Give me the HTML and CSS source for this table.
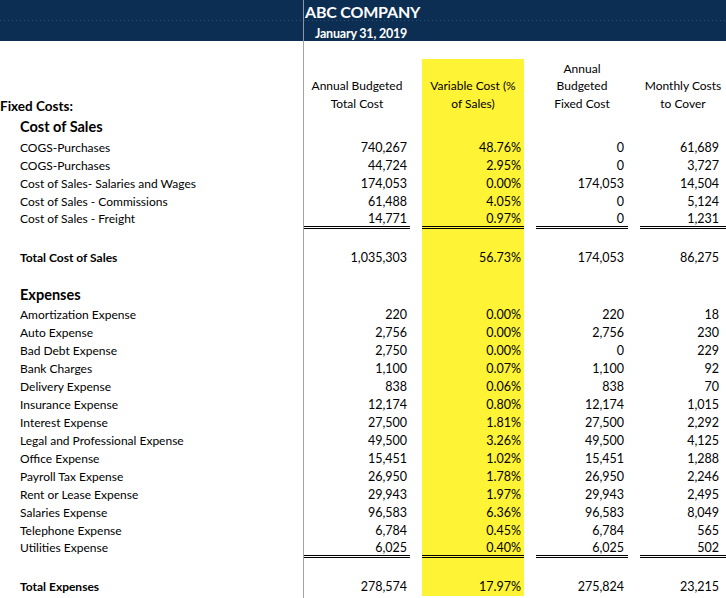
FILE: index.html
```html
<!DOCTYPE html>
<html>
<head>
<meta charset="utf-8">
<title>ABC Company - Break-even Costs</title>
<link rel="stylesheet" href="styles.css">
</head>
<body>
<div class="sheet">
  <div class="band">
    <div class="row band-row">
      <div class="label"></div>
      <div class="title">ABC COMPANY</div>
    </div>
    <div class="row band-row">
      <div class="label"></div>
      <div class="date">January 31, 2019</div>
    </div>
  </div>

  <div class="row gap-top"><div class="label"></div></div>

  <div class="row head">
    <div class="label"><span class="fixed">Fixed Costs:</span></div>
    <div class="h c1">Annual Budgeted<br>Total Cost</div>
    <div class="h c2 v">Variable Cost (%<br>of Sales)</div>
    <div class="h c3">Annual<br>Budgeted<br>Fixed Cost</div>
    <div class="h c4">Monthly Costs<br>to Cover</div>
  </div>

  <div class="row section cos">
    <div class="label"><span class="sec">Cost of Sales</span></div>
    <div class="c2 v"></div>
  </div>

  <div class="row"><div class="label item">COGS-Purchases</div><div class="n c1">740,267</div><div class="n c2 v">48.76%</div><div class="n c3">0</div><div class="n c4">61,689</div></div>
  <div class="row"><div class="label item">COGS-Purchases</div><div class="n c1">44,724</div><div class="n c2 v">2.95%</div><div class="n c3">0</div><div class="n c4">3,727</div></div>
  <div class="row"><div class="label item">Cost of Sales- Salaries and Wages</div><div class="n c1">174,053</div><div class="n c2 v">0.00%</div><div class="n c3">174,053</div><div class="n c4">14,504</div></div>
  <div class="row"><div class="label item">Cost of Sales - Commissions</div><div class="n c1">61,488</div><div class="n c2 v">4.05%</div><div class="n c3">0</div><div class="n c4">5,124</div></div>
  <div class="row last"><div class="label item">Cost of Sales - Freight</div><div class="n c1 ul">14,771</div><div class="n c2 v ul">0.97%</div><div class="n c3 ul">0</div><div class="n c4 ul">1,231</div></div>

  <div class="row b20"><div class="label"></div><div class="c2 v"></div></div>

  <div class="row total"><div class="label item strong">Total Cost of Sales</div><div class="n c1">1,035,303</div><div class="n c2 v">56.73%</div><div class="n c3">174,053</div><div class="n c4">86,275</div></div>

  <div class="row b17"><div class="label"></div><div class="c2 v"></div></div>

  <div class="row section exp">
    <div class="label"><span class="sec">Expenses</span></div>
    <div class="c2 v"></div>
  </div>

  <div class="row"><div class="label item">Amortization Expense</div><div class="n c1">220</div><div class="n c2 v">0.00%</div><div class="n c3">220</div><div class="n c4">18</div></div>
  <div class="row"><div class="label item">Auto Expense</div><div class="n c1">2,756</div><div class="n c2 v">0.00%</div><div class="n c3">2,756</div><div class="n c4">230</div></div>
  <div class="row"><div class="label item">Bad Debt Expense</div><div class="n c1">2,750</div><div class="n c2 v">0.00%</div><div class="n c3">0</div><div class="n c4">229</div></div>
  <div class="row"><div class="label item">Bank Charges</div><div class="n c1">1,100</div><div class="n c2 v">0.07%</div><div class="n c3">1,100</div><div class="n c4">92</div></div>
  <div class="row"><div class="label item">Delivery Expense</div><div class="n c1">838</div><div class="n c2 v">0.06%</div><div class="n c3">838</div><div class="n c4">70</div></div>
  <div class="row"><div class="label item">Insurance Expense</div><div class="n c1">12,174</div><div class="n c2 v">0.80%</div><div class="n c3">12,174</div><div class="n c4">1,015</div></div>
  <div class="row"><div class="label item">Interest Expense</div><div class="n c1">27,500</div><div class="n c2 v">1.81%</div><div class="n c3">27,500</div><div class="n c4">2,292</div></div>
  <div class="row"><div class="label item">Legal and Professional Expense</div><div class="n c1">49,500</div><div class="n c2 v">3.26%</div><div class="n c3">49,500</div><div class="n c4">4,125</div></div>
  <div class="row"><div class="label item">Office Expense</div><div class="n c1">15,451</div><div class="n c2 v">1.02%</div><div class="n c3">15,451</div><div class="n c4">1,288</div></div>
  <div class="row"><div class="label item">Payroll Tax Expense</div><div class="n c1">26,950</div><div class="n c2 v">1.78%</div><div class="n c3">26,950</div><div class="n c4">2,246</div></div>
  <div class="row"><div class="label item">Rent or Lease Expense</div><div class="n c1">29,943</div><div class="n c2 v">1.97%</div><div class="n c3">29,943</div><div class="n c4">2,495</div></div>
  <div class="row"><div class="label item">Salaries Expense</div><div class="n c1">96,583</div><div class="n c2 v">6.36%</div><div class="n c3">96,583</div><div class="n c4">8,049</div></div>
  <div class="row"><div class="label item">Telephone Expense</div><div class="n c1">6,784</div><div class="n c2 v">0.45%</div><div class="n c3">6,784</div><div class="n c4">565</div></div>
  <div class="row last"><div class="label item">Utilities Expense</div><div class="n c1 ul">6,025</div><div class="n c2 v ul">0.40%</div><div class="n c3 ul">6,025</div><div class="n c4 ul">502</div></div>

  <div class="row b20"><div class="label"></div><div class="c2 v"></div></div>

  <div class="row total"><div class="label item strong">Total Expenses</div><div class="n c1">278,574</div><div class="n c2 v">17.97%</div><div class="n c3">275,824</div><div class="n c4">23,215</div></div>

  <div class="row tail"><div class="label"></div></div>
</div>
</body>
</html>
```

FILE: styles.css
```css
* { box-sizing: border-box; }

html, body {
  margin: 0;
  padding: 0;
  background: #ffffff;
}

body {
  font-family: Lato, "Open Sans", "Liberation Sans", sans-serif;
  font-size: 12px;
  color: #000000;
  width: 726px;
  overflow: hidden;
}

.sheet {
  display: flex;
  flex-direction: column;
}

/* label | col1 | gap | col2 | gap | col3 | gap | col4 */
.row {
  display: grid;
  grid-template-columns: 304px 106px 12px 102px 12px 92px 12px 86px;
  height: 18px;
  line-height: 18px;
}

.label {
  grid-column: 1;
  border-right: 1px solid #a3a3a3;
  white-space: nowrap;
}

.c1 { grid-column: 2; }
.c2 { grid-column: 4; }
.c3 { grid-column: 6; }
.c4 { grid-column: 8; }

.item {
  padding-left: 20px;
}

.strong {
  font-weight: 700;
}

/* header band */
.band {
  background: #0b2e52;
  height: 41px;
  display: flex;
  flex-direction: column;
}

.band-row {
  height: 20px;
  line-height: 20px;
}

.band-row:first-child {
  height: 21px;
  background-image: linear-gradient(to right, rgba(255,255,255,0.16) 1px, transparent 1px);
  background-size: 4px 1px;
  background-repeat: repeat-x;
  background-position: 0 bottom;
}

.band-row .label {
  border-right-color: #8d95a0;
}

.title {
  grid-column: 2 / 9;
  color: #ffffff;
  font-weight: 700;
  font-size: 16px;
  line-height: 24px;
  padding-left: 1px;
  letter-spacing: -0.2px;
}

.date {
  grid-column: 2 / 9;
  color: #ffffff;
  font-weight: 700;
  font-size: 12.5px;
  line-height: 26px;
  padding-left: 11px;
  letter-spacing: -0.2px;
}

/* column headers */
.head {
  height: 54px;
  align-items: stretch;
}

.h {
  display: flex;
  flex-direction: column;
  justify-content: flex-end;
  text-align: center;
  line-height: 17.5px;
  padding-bottom: 1px;
}

.head .label {
  display: flex;
  align-items: flex-end;
}

.fixed {
  font-weight: 700;
  font-size: 13.5px;
  line-height: 14px;
}

.v {
  background: #fff335;
}

.section {
  height: 26px;
}

.section .label {
  display: flex;
  align-items: center;
  padding-left: 20px;
}

.cos .label {
  padding-top: 2px;
}

.sec {
  font-weight: 700;
  font-size: 14.5px;
}

.exp {
  height: 22px;
}

/* numbers */
.n {
  text-align: right;
  font-size: 12.5px;
}

.n.c1 { padding-right: 3px; }
.n.c2 { padding-right: 3px; }
.n.c3 { padding-right: 4px; }
.n.c4 { padding-right: 7px; }

.last .label {
  line-height: 15px;
}

.ul {
  border-bottom: 3px double #000000;
  line-height: 15px;
}

.gap-top { height: 18px; }
.b20 { height: 20px; }
.b17 { height: 17px; }
.tail { height: 2px; }
```
